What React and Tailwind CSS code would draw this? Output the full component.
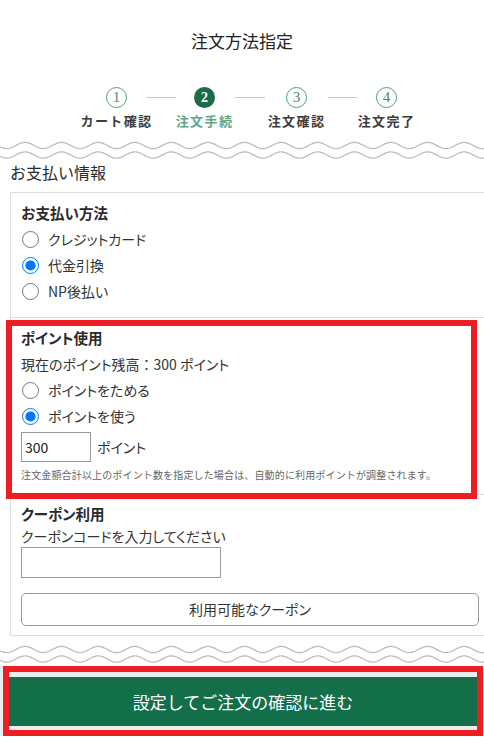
import React from "react";

const wavePath = (c) => {
  let d = "";
  for (let x = 0; x <= 490; x += 1) {
    const y = c - 3.1 * Math.cos((2 * Math.PI * (x - 25)) / 36.6);
    d += (x === 0 ? "M" : "L") + x + "," + y.toFixed(2);
  }
  return d;
};

function Waves() {
  return (
    <svg width="484" height="20" className="block">
      <path d={wavePath(5.5)} fill="none" stroke="#bdbdbd" strokeWidth="1.3" />
      <path d={wavePath(15)} fill="none" stroke="#bdbdbd" strokeWidth="1.3" />
    </svg>
  );
}

function Step({ n, label, active }) {
  return (
    <div className="flex flex-col items-center w-[21px]">
      {active ? (
        <div className="w-[21px] h-[21px] rounded-full bg-[#1a6d48] text-white flex items-center justify-center font-['Liberation_Serif',serif] text-[14px] font-bold leading-none">
          {n}
        </div>
      ) : (
        <div className="w-[21px] h-[21px] rounded-full border-[1.5px] border-[#4f9d79] text-[#3f8d69] flex items-center justify-center font-['Liberation_Serif',serif] text-[15px] leading-none">
          {n}
        </div>
      )}
      <div
        className={`mt-[5px] h-4 leading-4 whitespace-nowrap text-[13px] font-bold tracking-[1.4px] ${
          active ? "text-[#5ea686]" : "text-[#3c3c3c]"
        }`}
      >
        {label}
      </div>
    </div>
  );
}

function Radio({ name, label, checked }) {
  return (
    <label className="flex items-center gap-[9px] h-[26px] pl-px">
      <input
        type="radio"
        name={name}
        defaultChecked={checked}
        className="w-[17px] h-[17px] m-0 accent-[#0075ff]"
      />
      <span className="text-[14px] text-[#333] [font-feature-settings:'palt']">{label}</span>
    </label>
  );
}

export default function App() {
  return (
    <div className="w-[484px] overflow-hidden bg-white font-['Noto_Sans_CJK_JP',sans-serif] text-[#333]">
      {/* title */}
      <div className="pt-[29px] text-center text-[17px] leading-6 text-[#222]">注文方法指定</div>

      {/* steps */}
      <div className="mt-[34px] flex items-start pl-[106px]">
        <Step n="1" label="カート確認" />
        <div className="mt-[10px] ml-[19px] mr-[18px] w-[30px] h-px bg-[#c8c8c8]" />
        <Step n="2" label="注文手続" active />
        <div className="mt-[10px] ml-[20px] mr-[21px] w-[30px] h-px bg-[#c8c8c8]" />
        <Step n="3" label="注文確認" />
        <div className="mt-[10px] ml-[21px] mr-[19px] w-[29px] h-px bg-[#c8c8c8]" />
        <Step n="4" label="注文完了" />
      </div>

      <div className="mt-[11px]">
        <Waves />
      </div>

      <div className="mt-px ml-[10px] text-[16px] leading-[22px] text-[#2a2a2a]">お支払い情報</div>

      {/* card */}
      <div className="mt-[9px] ml-[10px] w-[480px] border border-[#ddd]">
        <div className="px-[10px] pt-[10px] pb-[13px] border-b border-[#ddd]">
          <div className="text-[14.5px] leading-5 font-bold text-[#2a2a2a]">お支払い方法</div>
          <div className="mt-[3px]">
            <Radio name="pay" label="クレジットカード" />
            <Radio name="pay" label="代金引換" checked />
            <Radio name="pay" label="NP後払い" />
          </div>
        </div>

        <div className="relative px-[10px] pt-[10px] pb-[12px] border-b border-[#ddd]">
          <div className="text-[14.5px] leading-5 font-bold text-[#2a2a2a] [font-feature-settings:'palt']">ポイント使用</div>
          <div className="mt-[6px] text-[14px] leading-5 [font-feature-settings:'palt']">
            現在のポイント残高<span className="[font-feature-settings:normal]">：</span>300 ポイント
          </div>
          <div className="mt-[3px]">
            <Radio name="pt" label="ポイントをためる" />
            <Radio name="pt" label="ポイントを使う" checked />
          </div>
          <div className="mt-[3px] flex items-center gap-[6px]">
            <input
              type="text"
              defaultValue="300"
              className="w-[70px] h-[30px] border border-[#999] px-[3px] text-[14px] text-[#222] outline-none"
            />
            <span className="text-[14px] [font-feature-settings:'palt']">ポイント</span>
          </div>
          <div className="mt-[6px] text-[10px] leading-[14px] tracking-[0.15px] text-[#666] whitespace-nowrap">
            注文金額合計以上のポイント数を指定した場合は、自動的に利用ポイントが調整されます。
          </div>
          <div className="pointer-events-none absolute left-[-5px] top-[2px] w-[471px] h-[179px] border-[6px] border-[#ee1d23] z-10" />
        </div>

        <div className="px-[10px] pt-[9px] pb-[9px]">
          <div className="text-[14.5px] leading-5 font-bold text-[#2a2a2a] [font-feature-settings:'palt']">クーポン利用</div>
          <div className="mt-[2px] text-[14px] leading-5 [font-feature-settings:'palt']">
            クーポンコードを入力してください
          </div>
          <input
            type="text"
            className="mt-px block w-[200px] h-[31px] border border-[#999] px-[3px] text-[14px] outline-none"
          />
          <button className="mt-[15px] block w-[458px] h-[33px] rounded-[5px] border border-[#999] bg-white text-[14px] text-[#333] [font-feature-settings:'palt']">
            利用可能なクーポン
          </button>
        </div>
      </div>

      <div className="mt-[8px]">
        <Waves />
      </div>

      {/* submit */}
      <div className="relative mt-[2px] h-[70px] bg-[#ececec] pt-[11px] pl-[9px] pr-[7px]">
        <button className="w-full h-[49px] bg-[#136f4a] text-white text-[17px]">
          設定してご注文の確認に進む
        </button>
        <div className="pointer-events-none absolute left-[3px] right-[1px] top-0 bottom-0 border-[6px] border-[#ee1d23]" />
      </div>
      <div className="h-[13px]" />
    </div>
  );
}
